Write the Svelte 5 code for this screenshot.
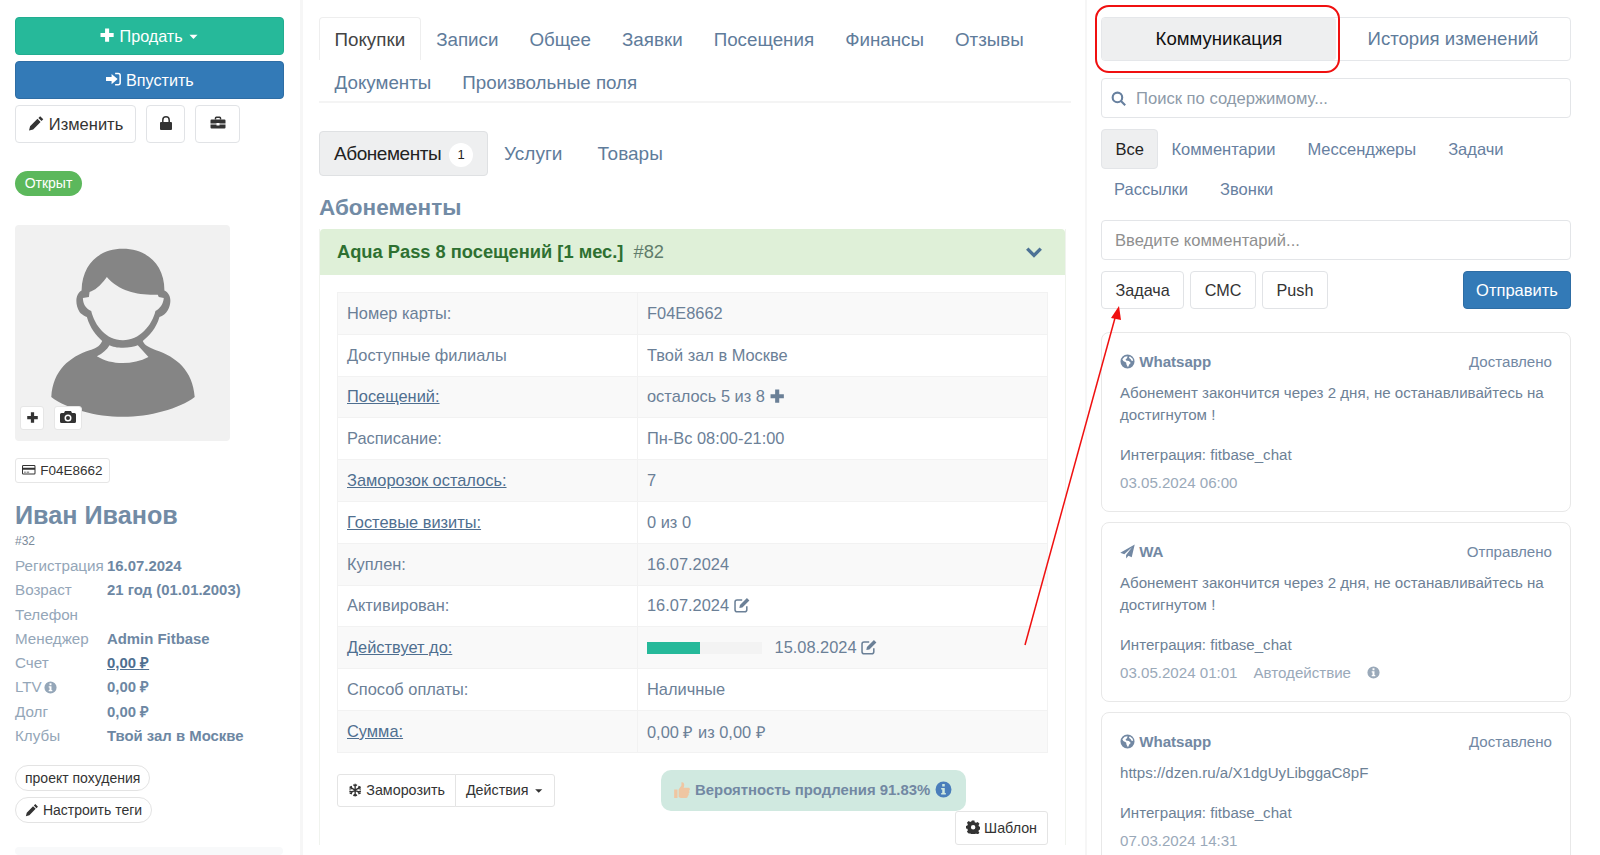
<script>
  const ICONS = {
    plus: { d: 'M6 1.5h4V6h4.5v4H10v4.5H6V10H1.5V6H6z' },
    caret: { d: 'M3 6h10l-5 5z' },
    signin: { d: 'M1 6h5.5V3l6 5-6 5v-3H1z', s: 'M10 2.5h3a2 2 0 0 1 2 2v7a2 2 0 0 1-2 2h-3' },
    pencil: { d: 'M11.8 1.2l3 3-1.7 1.7-3-3zM9.2 3.7l3 3L5 14l-4 1 1-4z' },
    lock: { d: 'M3 7h10a1 1 0 0 1 1 1v6a1 1 0 0 1-1 1H3a1 1 0 0 1-1-1V8a1 1 0 0 1 1-1z', s: 'M4.8 7V5a3.2 3.2 0 0 1 6.4 0v2' },
    briefcase: { d: 'M1.5 4.5h13a1 1 0 0 1 1 1V8.500H9.500V8h-3v.5H.5V5.500a1 1 0 0 1 1-1zM.5 9.500h6v1h3v-1h6v3a1 1 0 0 1-1 1h-13a1 1 0 0 1-1-1z', s: 'M5.500 4.500V3a.8.8 0 0 1 .8-.8h3.400a.8.8 0 0 1 .8.8v1.500' },
    camera: { d: 'M1.500 4H4l1-2h6l1 2h2.500A1.500 1.500 0 0 1 16 5.500v7A1.500 1.500 0 0 1 14.500 14h-13A1.500 1.500 0 0 1 0 12.500v-7A1.500 1.500 0 0 1 1.500 4zM8 5.500a3.500 3.500 0 1 0 0 7 3.500 3.500 0 0 0 0-7zM8 7a2 2 0 1 1 0 4 2 2 0 0 1 0-4z' },
    card: { d: 'M1.500 2.500h13A1.500 1.500 0 0 1 16 4v8a1.500 1.500 0 0 1-1.500 1.500h-13A1.500 1.500 0 0 1 0 12V4a1.500 1.500 0 0 1 1.500-1.500zM1.200 4v1.500h13.600V4a.3.3 0 0 0-.3-.3h-13a.3.3 0 0 0-.3.3zM1.200 8v4a.3.3 0 0 0 .3.3h13a.3.3 0 0 0 .3-.3V8zM2.500 10.500h2v.8h-2zM5.500 10.500h3v.8h-3z' },
    info: { d: 'M8 .5a7.500 7.500 0 1 1 0 15 7.500 7.500 0 0 1 0-15zM6.800 2.800v2.300h2.400V2.800zM5.800 6.500v1.500h1v3.200h-1v1.500h4.400v-1.500h-1V6.500z' },
    search: { s: 'M7 2.500a4.500 4.500 0 1 0 0 9 4.500 4.500 0 0 0 0-9zM10.300 10.300l4 4' },
    globe: { d: 'M8 .5a7.500 7.500 0 1 1 0 15 7.500 7.500 0 0 1 0-15zM5 3L2.500 5.500l1 2 3 1.500.5 2.500 1.500 2.500 1.500-3 1.500-1.500-2-2-3-.5-.5-1.500 1.500-1 .5-2zM10.500 2.500L9.500 4l2 1.500.5 1.500 2 .5-.5-2.500z' },
    plane: { d: 'M15.700.5L.3 9.200l4.300 1.700L12.800 3.500 6.500 11.700v3.800l2.500-3 3.500 1.500z' },
    edit: { d: 'M12.600 1l2.400 2.400-6.800 6.800-3 .6.600-3z', s: 'M12.500 9v3.500a2 2 0 0 1-2 2H3a2 2 0 0 1-2-2V5a2 2 0 0 1 2-2h5' },
    snow: { s: 'M8 .8v14.400M1.800 4.400l12.400 7.200M14.200 4.400L1.800 11.600M6 1.800l2 2 2-2M6 14.200l2-2 2 2M1.500 6.800l2.700-.7-.7-2.700M14.500 9.200l-2.700.7.7 2.700M14.500 6.800l-2.700-.7.7-2.700M1.500 9.200l2.700.7-.7 2.700' },
    cog: { d: 'M6.600.5h2.800l.4 2 1.500.7 1.800-1.100 2 2-1.100 1.700.6 1.500 2 .5v2.800l-2 .4-.7 1.500 1.100 1.800-2 2-1.700-1.100-1.500.6-.5 2H6.600l-.4-2-1.500-.6L3 15.200l-2-2 1.100-1.800-.6-1.500-2-.4V6.700l2-.5.6-1.500L1 3l2-2 1.700 1.100 1.500-.6zM8 5.500a2.500 2.500 0 1 0 0 5 2.500 2.500 0 0 0 0-5z' },
    chevron: { s: 'M2 5l6 6 6-6' },
    thumb: { d: 'M1 7.500h3V15H1zM5 7.500l2.500-3.500V1.200c1.600-.4 2.500.8 2.500 2.300 0 1-.4 1.800-.6 2.500h4.300c1.700 0 1.700 2.400.4 2.700.9.600.7 2.100-.3 2.400.5.800.2 2-.7 2.200.2 1-.5 1.700-1.400 1.700H7c-1 0-1.500-.6-2-.8z' }
  };

  const TOP_TABS = ['Покупки', 'Записи', 'Общее', 'Заявки', 'Посещения', 'Финансы', 'Отзывы', 'Документы', 'Произвольные поля'];

  const PROFILE = [
    ['Регистрация', '16.07.2024'],
    ['Возраст', '21 год (01.01.2003)'],
    ['Телефон', ''],
    ['Менеджер', 'Admin Fitbase'],
    ['Счет', '0,00 ₽', 'link'],
    ['LTV', '0,00 ₽', 'info'],
    ['Долг', '0,00 ₽'],
    ['Клубы', 'Твой зал в Москве']
  ];

  const ROWS = [
    { label: 'Номер карты:', value: 'F04E8662' },
    { label: 'Доступные филиалы', value: 'Твой зал в Москве' },
    { label: 'Посещений:', value: 'осталось 5 из 8', link: true, icon: 'plus' },
    { label: 'Расписание:', value: 'Пн-Вс 08:00-21:00' },
    { label: 'Заморозок осталось:', value: '7', link: true },
    { label: 'Гостевые визиты:', value: '0 из 0', link: true },
    { label: 'Куплен:', value: '16.07.2024' },
    { label: 'Активирован:', value: '16.07.2024', icon: 'edit' },
    { label: 'Действует до:', value: '15.08.2024', link: true, icon: 'edit', progress: 46 },
    { label: 'Способ оплаты:', value: 'Наличные' },
    { label: 'Сумма:', value: '0,00 ₽ из 0,00 ₽', link: true }
  ];

  const FEED = [
    { icon: 'globe', title: 'Whatsapp', status: 'Доставлено', text: 'Абонемент закончится через 2 дня, не останавливайтесь на достигнутом !', date: '03.05.2024 06:00' },
    { icon: 'plane', title: 'WA', status: 'Отправлено', text: 'Абонемент закончится через 2 дня, не останавливайтесь на достигнутом !', date: '03.05.2024 01:01', auto: true },
    { icon: 'globe', title: 'Whatsapp', status: 'Доставлено', text: 'https://dzen.ru/a/X1dgUyLibggaC8pF', date: '07.03.2024 14:31' }
  ];
</script>

{#snippet icon(name, cls = '')}
  <svg class="ic {cls}" viewBox="0 0 16 16" aria-hidden="true">
    {#if ICONS[name].d}<path d={ICONS[name].d} fill="currentColor" fill-rule="evenodd" />{/if}
    {#if ICONS[name].s}<path d={ICONS[name].s} fill="none" stroke="currentColor" stroke-width={name === 'chevron' ? 3 : name === 'search' ? 2 : 1.500} />{/if}
  </svg>
{/snippet}

<div class="page">
  <aside class="side">
    <button class="btn wide green">{@render icon('plus')} Продать {@render icon('caret', 'small')}</button>
    <button class="btn wide blue">{@render icon('signin')} Впустить</button>
    <div class="tools">
      <button class="btn plain edit">{@render icon('pencil')} Изменить</button>
      <button class="btn plain square">{@render icon('lock')}</button>
      <button class="btn plain square case">{@render icon('briefcase')}</button>
    </div>
    <span class="state">Открыт</span>
    <div class="avatar">
      <svg viewBox="46 675 646 646" aria-hidden="true">
        <path fill="#858585" d="M370 745C300 745 248 790 246 870C228 880 225 910 240 935C248 945 258 948 262 950C272 985 290 1005 308 1022C300 1040 285 1045 270 1050C210 1070 160 1110 155 1190C200 1225 290 1250 370 1250C450 1250 540 1225 586 1190C580 1110 530 1070 470 1050C450 1042 435 1035 430 1022C450 1005 470 985 480 950C490 948 500 940 505 930C518 905 515 880 495 870C495 790 440 745 370 745Z" />
        <path fill="#f1f1f1" d="M322 830C300 860 285 870 270 875L268 890L250 893C250 910 258 925 275 932C285 975 320 1020 370 1020C420 1020 458 975 468 932C482 925 492 910 493 893L478 890L475 883C420 885 360 875 322 830Z" />
        <path fill="#f1f1f1" d="M330 1035C345 1045 395 1045 415 1035L447 1070C400 1095 335 1095 292 1068C310 1060 322 1048 330 1035Z" />
      </svg>
      <div class="avatar-tools">
        <button class="mini">{@render icon('plus')}</button>
        <button class="mini wider">{@render icon('camera')}</button>
      </div>
    </div>
    <div class="card-no">{@render icon('card')} F04E8662</div>
    <h1 class="name">Иван Иванов</h1>
    <div class="uid">#32</div>
    <dl class="profile">
      {#each PROFILE as [label, value, kind]}
        <dt>{label}{#if kind === 'info'} {@render icon('info')}{/if}</dt>
        <dd class:link={kind === 'link'}>{value}</dd>
      {/each}
    </dl>
    <div class="tags">
      <span class="tag">проект похудения</span>
      <span class="tag">{@render icon('pencil')} Настроить теги</span>
    </div>
    <div class="side-next"></div>
  </aside>

  <main class="center">
    <nav class="tabs">
      {#each TOP_TABS as tab, i}
        <a class="tab" class:active={i === 0} href="#top">{tab}</a>
      {/each}
    </nav>
    <nav class="subtabs">
      <a class="sub active" href="#top">Абонементы <span class="count">1</span></a>
      <a class="sub" href="#top">Услуги</a>
      <a class="sub" href="#top">Товары</a>
    </nav>
    <h2 class="section">Абонементы</h2>
    <section class="panel">
      <header class="panel-head">
        <span><b>Aqua Pass 8 посещений [1 мес.]</b> <em>#82</em></span>
        {@render icon('chevron')}
      </header>
      <div class="panel-body">
        <table>
          <tbody>
            {#each ROWS as row}
              <tr>
                <td class="key"><span class:link={row.link}>{row.label}</span></td>
                <td>
                  {#if row.progress}<span class="bar"><span class="fill" style="width: {row.progress}%"></span></span>{/if}
                  {row.value}
                  {#if row.icon}{@render icon(row.icon)}{/if}
                </td>
              </tr>
            {/each}
          </tbody>
        </table>
        <div class="actions">
          <div class="group">
            <button class="btn-sm">{@render icon('snow')} Заморозить</button>
            <button class="btn-sm">Действия {@render icon('caret', 'small')}</button>
          </div>
          <div class="chance">
            <span class="thumb">{@render icon('thumb')}</span>
            Вероятность продления 91.83%
            <span class="chance-info">{@render icon('info')}</span>
          </div>
        </div>
        <div class="template"><button class="btn-sm alone">{@render icon('cog')} Шаблон</button></div>
      </div>
    </section>
  </main>

  <section class="right">
    <div class="segments">
      <button class="segment active">Коммуникация</button>
      <button class="segment">История изменений</button>
    </div>
    <div class="field search">{@render icon('search')} <span>Поиск по содержимому...</span></div>
    <nav class="filters">
      <a class="filter active" href="#top">Все</a>
      <a class="filter" href="#top">Комментарии</a>
      <a class="filter" href="#top">Мессенджеры</a>
      <a class="filter" href="#top">Задачи</a>
      <a class="filter" href="#top">Рассылки</a>
      <a class="filter" href="#top">Звонки</a>
    </nav>
    <div class="field comment"><span>Введите комментарий...</span></div>
    <div class="composer">
      <button class="btn plain compose">Задача</button>
      <button class="btn plain compose">СМС</button>
      <button class="btn plain compose">Push</button>
      <button class="btn blue send">Отправить</button>
    </div>
    {#each FEED as item}
      <article class="msg">
        <div class="msg-top">
          <strong>{@render icon(item.icon)} {item.title}</strong>
          <span>{item.status}</span>
        </div>
        <p class="msg-text">{item.text}</p>
        <p class="msg-int">Интеграция: fitbase_chat</p>
        <div class="msg-date">
          <span>{item.date}</span>
          {#if item.auto}<span class="auto">Автодействие</span>{@render icon('info')}{/if}
        </div>
      </article>
    {/each}
  </section>

  <!-- red markup drawn on top of the screenshot -->
  <div class="mark-box"></div>
  <svg class="mark-arrow" viewBox="0 0 1600 855" aria-hidden="true">
    <line x1="1025" y1="645" x2="1115" y2="318" stroke="#f01010" stroke-width="1.500" />
    <path d="M1119 306L1121 320L1111 318Z" fill="#f01010" />
  </svg>
</div>

<style>
  :global(body) {
    margin: 0;
    background: #fff;
    font-family: 'Liberation Sans', Arial, sans-serif;
    color: #67809f;
  }

  .page {
    position: relative;
    display: grid;
    grid-template-columns: 303px 784px 1fr;
    height: 855px;
    overflow: hidden;
  }

  .ic {
    display: inline-block;
    width: 1em;
    height: 1em;
    vertical-align: -0.12em;
  }

  .ic.small {
    width: 0.8em;
    height: 0.8em;
    vertical-align: -0.06em;
  }

  button {
    font-family: inherit;
    cursor: pointer;
  }

  a {
    text-decoration: none;
    color: inherit;
  }

  .btn {
    box-sizing: border-box;
    border: 1px solid transparent;
    border-radius: 4px;
    font-size: 16.200px;
  }

  .wide {
    display: block;
    width: 269px;
    height: 38px;
    margin-bottom: 6px;
    color: #fff;
  }

  .green {
    background: #26b99a;
    border-color: #22ad90;
  }

  .blue {
    background: #337ab7;
    border-color: #2e6da4;
    color: #fff;
  }

  .plain {
    background: #fff;
    border-color: #e1e3e6;
    color: #333;
  }

  .tools {
    display: flex;
    gap: 10px;
    height: 38px;
  }

  .edit {
    width: 121px;
    padding: 0;
    font-size: 16.500px;
  }

  .square {
    width: 39px;
    padding: 0;
    font-size: 16px;
  }

  .case {
    width: 45px;
  }

  .side {
    box-sizing: border-box;
    padding: 17px 0 0 15px;
    border-right: 3px solid #f6f6f6;
  }

  .state {
    display: block;
    box-sizing: border-box;
    width: 67px;
    height: 25px;
    margin-top: 28px;
    border-radius: 13px;
    background: #5cb85c;
    color: #fff;
    font-size: 14px;
    line-height: 25px;
    text-align: center;
  }

  .avatar {
    position: relative;
    width: 215px;
    height: 216px;
    margin-top: 29px;
    border-radius: 4px;
    background: #f1f1f1;
  }

  .avatar > svg {
    display: block;
    width: 100%;
    height: 100%;
  }

  .avatar-tools {
    position: absolute;
    left: 5px;
    bottom: 11px;
    display: flex;
    gap: 10px;
  }

  .mini {
    width: 24px;
    height: 24px;
    padding: 0;
    border: 1px solid #e6e6e6;
    border-radius: 3px;
    background: #fff;
    color: #333;
    font-size: 13px;
  }

  .mini.wider {
    width: 28px;
    font-size: 16px;
  }

  .card-no {
    display: inline-block;
    box-sizing: border-box;
    height: 25px;
    margin-top: 17px;
    padding: 0 6px;
    border: 1px solid #e6e6e6;
    border-radius: 3px;
    color: #333;
    font-size: 13.500px;
    line-height: 23px;
  }

  .card-no .ic {
    margin-right: 1px;
  }

  .name {
    margin: 15px 0 0;
    color: #728ba5;
    font-size: 25.200px;
    line-height: 34px;
    font-weight: 700;
  }

  .uid {
    margin-top: 1px;
    color: #7b8a9a;
    font-size: 12px;
    line-height: 16px;
  }

  .profile {
    display: grid;
    grid-template-columns: 92px 1fr;
    grid-auto-rows: 24.300px;
    margin: 5px 0 0;
    line-height: 24.300px;
  }

  .profile dt {
    color: #94a6b8;
    font-size: 15.200px;
    white-space: nowrap;
  }

  .profile dt .ic {
    font-size: 13px;
    margin-left: 2px;
  }

  .profile dd {
    margin: 0;
    color: #6d87a3;
    font-size: 14.900px;
    font-weight: 700;
  }

  .profile dd.link {
    color: #4f6f90;
    text-decoration: underline;
  }

  .tags {
    display: flex;
    flex-direction: column;
    align-items: flex-start;
    gap: 6px;
    margin-top: 17px;
  }

  .tag {
    box-sizing: border-box;
    height: 26px;
    padding: 0 9px;
    border: 1px solid #e3e3e3;
    border-radius: 13px;
    color: #333;
    font-size: 14px;
    line-height: 24px;
  }

  .side-next {
    height: 8px;
    width: 268px;
    margin-top: 24px;
    border-radius: 4px;
    background: #f8f9fa;
  }

  .center {
    box-sizing: border-box;
    padding: 17px 19px 0 16px;
    border-right: 2px solid #f6f6f6;
  }

  .tabs {
    display: flex;
    flex-wrap: wrap;
    border-bottom: 2px solid #f4f4f4;
    height: 84px;
    align-content: flex-start;
    margin-right: -5px;
  }

  .tab {
    box-sizing: border-box;
    height: 43px;
    padding: 0 14.500px;
    border: 1px solid transparent;
    border-bottom: 0;
    border-radius: 4px 4px 0 0;
    color: #5f7c9b;
    font-size: 18.800px;
    line-height: 43px;
  }

  .tab.active {
    border-color: #eee;
    color: #444;
  }

  .subtabs {
    display: flex;
    gap: 3px;
    margin-top: 28px;
    height: 45px;
  }

  .sub {
    box-sizing: border-box;
    padding: 0 15px;
    border: 1px solid transparent;
    border-radius: 4px;
    color: #5f7c9b;
    font-size: 19px;
    line-height: 43px;
  }

  .sub.active {
    margin-right: -3px;
    padding: 0 14px;
    background: #eeeff0;
    border-color: #dfe1e3;
    color: #222;
    letter-spacing: -0.45px;
  }

  .count {
    display: inline-block;
    width: 24px;
    height: 24px;
    margin-left: 3px;
    border-radius: 50%;
    background: #fff;
    font-size: 13px;
    line-height: 24px;
    text-align: center;
    vertical-align: 1px;
  }

  .section {
    margin: 17px 0 0;
    color: #728ba5;
    font-size: 22.500px;
    line-height: 30px;
  }

  .panel {
    margin-top: 6px;
    border-left: 1px solid #f0f3ee;
    border-right: 1px solid #f0f3ee;
  }

  .panel-head {
    display: flex;
    justify-content: space-between;
    align-items: center;
    box-sizing: border-box;
    height: 46px;
    padding: 0 22px 0 17px;
    border-radius: 4px 4px 0 0;
    background: #dff0d8;
    font-size: 18.300px;
  }

  .panel-head b {
    color: #2e7031;
  }

  .panel-head em {
    margin-left: 5px;
    font-style: normal;
    color: #5f7c6b;
  }

  .panel-head .ic {
    width: 18px;
    height: 18px;
    color: #4d7295;
  }

  .panel-body {
    padding: 17px 17px 0;
  }

  table {
    width: 100%;
    border-collapse: collapse;
    border: 1px solid #f0f0f0;
    font-size: 16.400px;
  }

  tr {
    height: 41.800px;
  }

  tr:nth-child(odd) {
    background: #f9f9f9;
  }

  td {
    box-sizing: border-box;
    padding: 0 9px;
    border: 1px solid #f2f2f2;
    color: #6b8097;
  }

  td.key {
    width: 300px;
  }

  .link {
    color: #4f6f90;
    text-decoration: underline;
  }

  .bar {
    display: inline-block;
    width: 115px;
    height: 12px;
    margin-right: 8px;
    background: #f3f3f3;
    vertical-align: -1px;
  }

  .fill {
    display: block;
    height: 100%;
    background: #26b99a;
  }

  .actions {
    display: flex;
    align-items: center;
    margin-top: 17px;
    height: 41px;
  }

  .group {
    display: flex;
    width: 215px;
  }

  .btn-sm {
    box-sizing: border-box;
    height: 33px;
    padding: 0 10px;
    border: 1px solid #e4e4e4;
    background: #fff;
    color: #333;
    font-size: 14.300px;
    white-space: nowrap;
  }

  .group .btn-sm:first-child {
    border-radius: 3px 0 0 3px;
  }

  .group .btn-sm:last-child {
    margin-left: -1px;
    border-radius: 0 3px 3px 0;
  }

  .chance {
    display: flex;
    align-items: center;
    box-sizing: border-box;
    width: 305px;
    height: 41px;
    margin-left: 109px;
    padding: 0 12px;
    border-radius: 10px;
    background: #d0e9e0;
    color: #7288a3;
    font-size: 14.900px;
    font-weight: 700;
    white-space: nowrap;
  }

  .thumb {
    margin-right: 4px;
    color: #efc6a2;
    font-size: 18px;
    line-height: 1;
  }

  .chance-info {
    margin-left: 5px;
    color: #4a7ebb;
    font-size: 17px;
    line-height: 1;
  }

  .template {
    display: flex;
    justify-content: flex-end;
  }

  .alone {
    height: 34px;
    border-radius: 3px;
  }

  .right {
    box-sizing: border-box;
    padding: 17px 29px 0 14px;
  }

  .segments {
    display: flex;
    height: 44px;
    box-sizing: border-box;
    border: 1px solid #e5e7ea;
    border-radius: 4px;
  }

  .segment {
    flex: 1;
    padding: 0;
    border: 0;
    border-radius: 3px;
    background: none;
    color: #5f7c9b;
    font-size: 18.600px;
  }

  .segment.active {
    background: #eeeff0;
    color: #111;
  }

  .field {
    display: flex;
    align-items: center;
    box-sizing: border-box;
    padding-top: 1px;
    border: 1px solid #e3e5e8;
    border-radius: 4px;
    color: #8d9aa8;
    font-size: 16.600px;
  }

  .search {
    height: 40px;
    margin-top: 17px;
    padding-left: 8px;
  }

  .search .ic {
    width: 17px;
    height: 17px;
    margin-right: 9px;
    color: #67809f;
  }

  .filters {
    display: flex;
    flex-wrap: wrap;
    margin-top: 11px;
    font-size: 16.500px;
    width: 430px;
  }

  .filter {
    box-sizing: border-box;
    height: 40px;
    padding: 0 13px;
    border-radius: 4px;
    color: #67809f;
    line-height: 40px;
    margin-right: 6px;
  }

  .filter.active {
    margin-right: 0;
    padding: 0 13.500px;
    background: #eeeff0;
    border: 1px solid #e3e5e8;
    color: #222;
    line-height: 38px;
  }

  .comment {
    height: 40px;
    margin-top: 11px;
    padding-left: 13px;
    color: #8f8f8f;
  }

  .composer {
    display: flex;
    gap: 6px;
    margin-top: 11px;
  }

  .compose {
    height: 38px;
    padding: 0 13.500px;
    font-size: 16.200px;
  }

  .send {
    width: 108px;
    height: 38px;
    margin-left: auto;
    font-size: 16.500px;
  }

  .msg {
    box-sizing: border-box;
    height: 180px;
    margin-top: 10px;
    padding: 19px 18px 0;
    border: 1px solid #e8e8e8;
    border-radius: 8px;
    color: #6d8196;
    font-size: 15.100px;
  }

  .composer + .msg {
    margin-top: 23px;
  }

  .msg-top {
    display: flex;
    justify-content: space-between;
    line-height: 20px;
    color: #7288a3;
  }

  .msg-top strong {
    color: #7288a3;
  }

  .msg-top .ic {
    font-size: 15px;
  }

  .msg-text {
    margin: 10px 0 0;
    line-height: 21.800px;
  }

  .msg-int {
    margin: 18px 0 0;
    line-height: 22px;
  }

  .msg-date {
    display: flex;
    align-items: center;
    margin-top: 6px;
    color: #9aa9b9;
    line-height: 22px;
  }

  .auto {
    margin: 0 16px;
  }

  .msg-date .ic {
    font-size: 13px;
  }

  .mark-box {
    position: absolute;
    left: 1095px;
    top: 5px;
    width: 245px;
    height: 68px;
    box-sizing: border-box;
    border: 2px solid #f01010;
    border-radius: 14px;
  }

  .mark-arrow {
    position: absolute;
    inset: 0;
    width: 1600px;
    height: 855px;
    pointer-events: none;
  }
</style>
